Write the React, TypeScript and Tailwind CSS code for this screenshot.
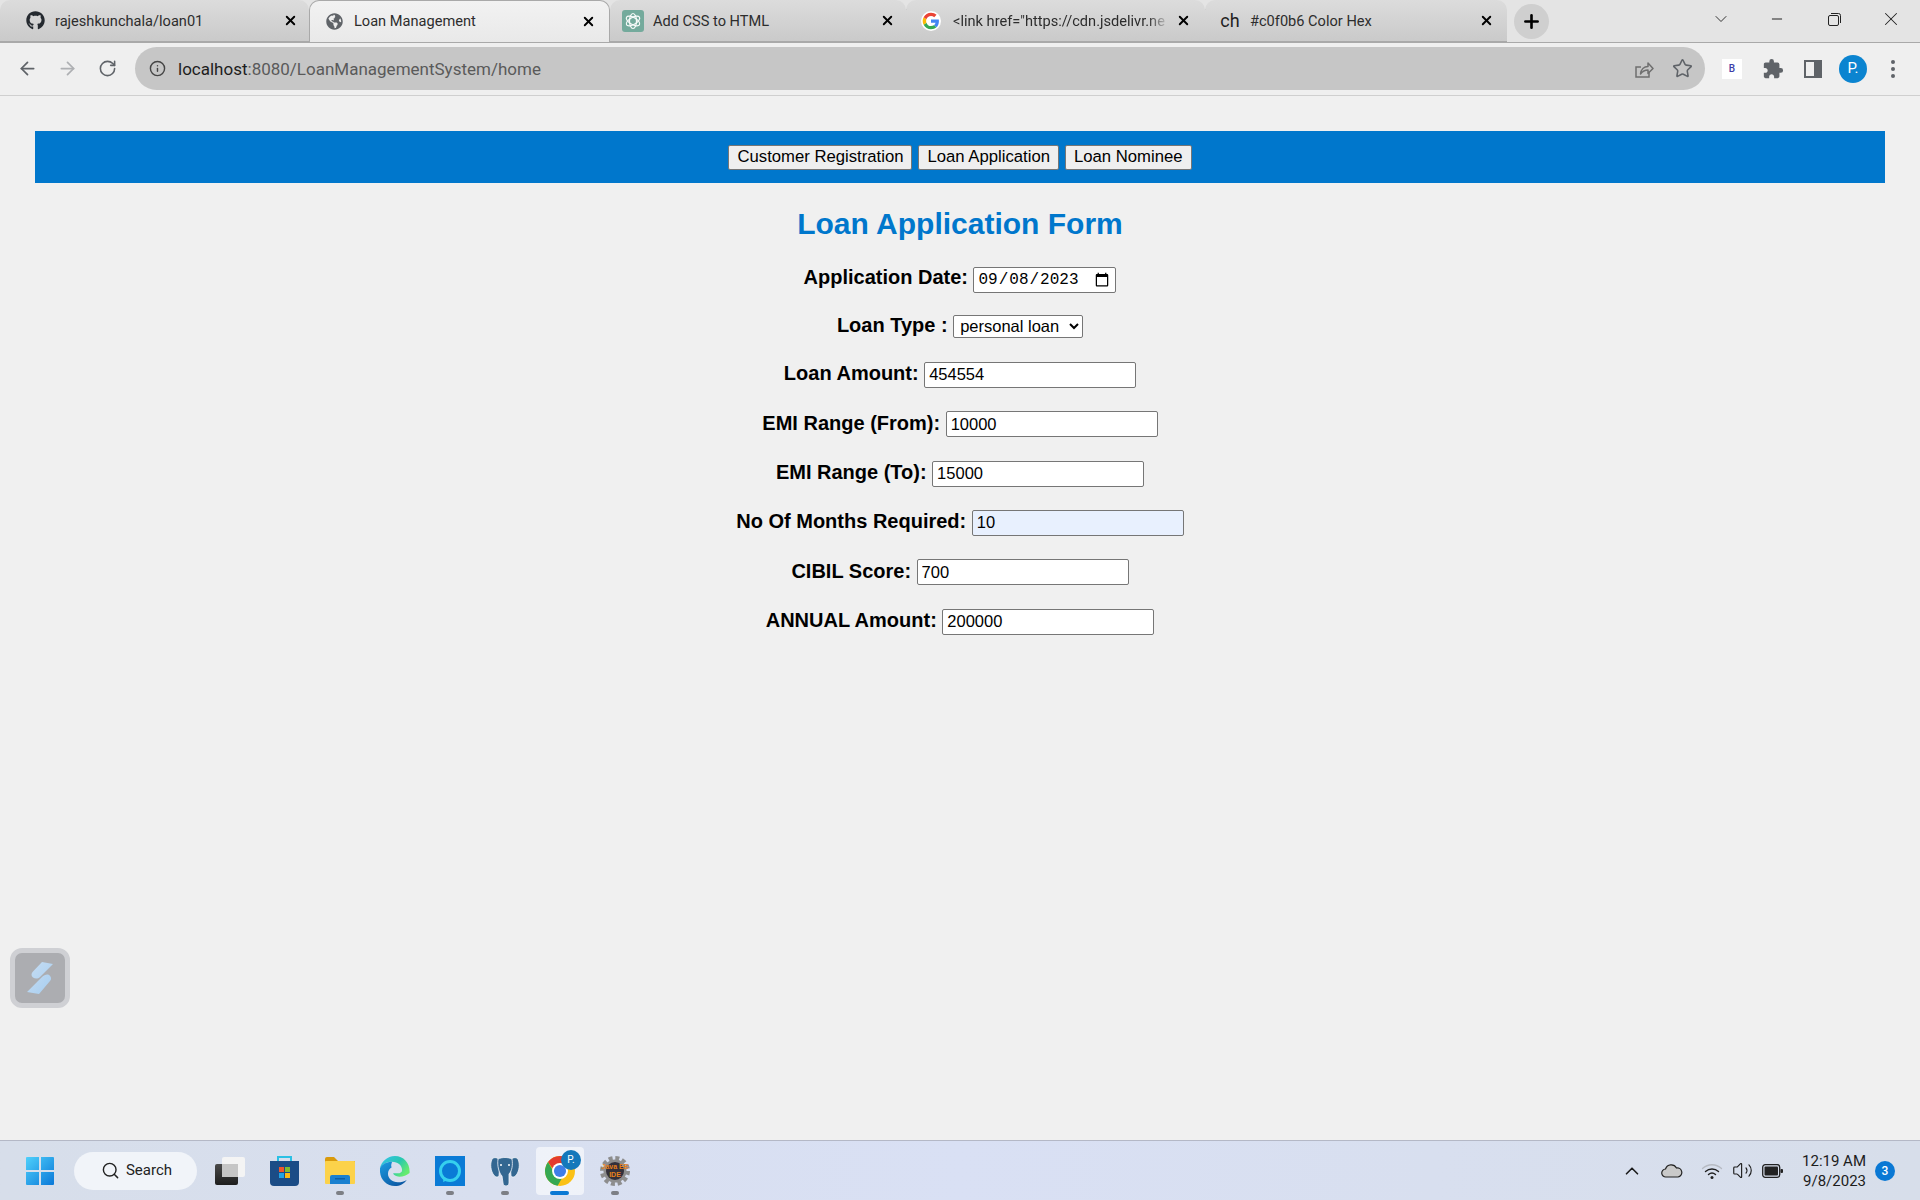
import { ArrowLeft, ArrowRight, RotateCw, Info, Star, Search, ChevronUp, ChevronDown, Minus, X, Plus, Volume2 } from 'lucide-react'
import { FaGithub, FaGlobeAmericas } from 'react-icons/fa'
import { MdExtension } from 'react-icons/md'
import type { ReactNode } from 'react'

const uiFont = "font-['Roboto',sans-serif]"
const pageFont = "font-['Liberation_Sans',Arial,sans-serif]"

function ChatGptIcon() {
  return (
    <svg width="22" height="22" viewBox="0 0 22 22">
      <rect width="22" height="22" rx="3" fill="#74aa9c" />
      <g fill="none" stroke="#fff" strokeWidth="1.2" opacity="0.95">
        <ellipse cx="11" cy="11" rx="3.5" ry="7.5" />
        <ellipse cx="11" cy="11" rx="3.5" ry="7.5" transform="rotate(60 11 11)" />
        <ellipse cx="11" cy="11" rx="3.5" ry="7.5" transform="rotate(120 11 11)" />
      </g>
    </svg>
  )
}

function GoogleIcon() {
  return (
    <svg width="20" height="20" viewBox="0 0 48 48">
      <circle cx="24" cy="24" r="24" fill="#fff" />
      <path fill="#4285F4" d="M43 24.5c0-1.5-.1-2.6-.4-3.9H24v7.3h10.9c-.5 2.6-2 4.8-4.2 6.3l6.4 5c3.8-3.5 5.9-8.700 5.900-14.700z" />
      <path fill="#34A853" d="M24 44c5.400 0 9.900-1.800 13.100-4.800l-6.400-5c-1.700 1.200-4 2-6.700 2-5.200 0-9.600-3.500-11.100-8.200l-6.600 5.100C9.600 39.600 16.300 44 24 44z" />
      <path fill="#FBBC05" d="M12.900 28c-.4-1.200-.6-2.600-.6-4s.2-2.800.6-4l-6.600-5.100C4.800 17.600 4 20.700 4 24s.8 6.400 2.300 9.100z" />
      <path fill="#EA4335" d="M24 11.800c3 0 5.600 1 7.700 3l5.600-5.600C33.900 6 29.400 4 24 4 16.300 4 9.600 8.400 6.300 14.900l6.600 5.100c1.500-4.700 5.900-8.200 11.100-8.200z" />
    </svg>
  )
}

function ShareIcon() {
  return (
    <svg width="20" height="20" viewBox="0 0 20 20" fill="none" stroke="#6f6f6f" strokeWidth="1.5">
      <path d="M15 12.500V18H2V8h5" />
      <path d="M6.500 15c.5-4.500 3.500-7.500 7.500-7.500V4l5 5.500-5 5V11c-3 0-5.500 1.300-7.500 4z" strokeLinejoin="round" />
    </svg>
  )
}

function SidePanelIcon() {
  return (
    <svg width="18" height="18" viewBox="0 0 18 18">
      <path fill="#5f6368" fillRule="evenodd" d="M0 0h18v18H0zM2 2v14h8V2z" />
    </svg>
  )
}

function TaskViewIcon() {
  return (
    <svg width="30" height="28" viewBox="0 0 30 28">
      <defs>
        <linearGradient id="tvDark" x1="0" y1="0" x2="0" y2="1">
          <stop offset="0" stopColor="#4a4a4a" />
          <stop offset="1" stopColor="#1d1d1d" />
        </linearGradient>
      </defs>
      <rect y="7" width="23" height="21" rx="2" fill="url(#tvDark)" />
      <rect x="7" y="0" width="23" height="20" rx="2" fill="#f4f4f4" />
      <rect x="7" y="7" width="16" height="13" fill="#c6c6c6" />
    </svg>
  )
}

function StoreIcon() {
  return (
    <svg width="29" height="30" viewBox="0 0 29 30">
      <path d="M8 6V1h13v5" fill="none" stroke="#2bc0e4" strokeWidth="2" />
      <path d="M0 5h29v21a4 4 0 0 1-4 4H4a4 4 0 0 1-4-4z" fill="#1b4c86" />
      <rect x="9" y="11" width="5" height="5" fill="#f0562a" />
      <rect x="15" y="11" width="5" height="5" fill="#7fbb2f" />
      <rect x="9" y="17" width="5" height="5" fill="#1fa3e5" />
      <rect x="15" y="17" width="5" height="5" fill="#fbb913" />
    </svg>
  )
}

function FilesIcon() {
  return (
    <svg width="30" height="27" viewBox="0 0 30 27">
      <path d="M0 2a2 2 0 0 1 2-2h7l4 4h17v3H0z" fill="#d99a0c" />
      <rect y="4" width="30" height="23" rx="1" fill="#fcd24a" />
      <path d="M5 20a2 2 0 0 1 2-2h16a2 2 0 0 1 2 2v7H5z" fill="#1a80d0" />
      <rect x="10" y="21" width="10" height="1.500" fill="#0d5ea6" />
    </svg>
  )
}

function EdgeIcon() {
  return (
    <svg width="30" height="30" viewBox="0 0 32 32">
      <defs>
        <linearGradient id="edgeA" x1="0" y1="0" x2="1" y2="0.6">
          <stop offset="0" stopColor="#35c1f1" />
          <stop offset="0.6" stopColor="#28c8b0" />
          <stop offset="1" stopColor="#66eb6e" />
        </linearGradient>
        <linearGradient id="edgeB" x1="0" y1="0" x2="0.7" y2="1">
          <stop offset="0" stopColor="#1b9de2" />
          <stop offset="1" stopColor="#0c59a4" />
        </linearGradient>
      </defs>
      <path d="M16 0C7.500 0 1.500 6 0 13c3-5 8-7 12.500-7C20 6 24 11 23.500 15.500c0 2-2 3-4.500 3h-5c.3 2 3 3.500 6.500 3.500 4.500 0 8-1.500 11-4C32.300 8 25.500 0 16 0z" fill="url(#edgeA)" />
      <path d="M0 13C-1 24 6 32 16 32c5 0 10-2.500 12.500-6.500-2.500 1.500-6 2.500-9.500 2.500-6 0-10.500-4-10.500-9 0-3 1.500-5.500 4-7-1.500-2 .5-6 .5-6C7 6 2 8.500 0 13z" fill="url(#edgeB)" />
    </svg>
  )
}

function AlexaIcon() {
  return (
    <svg width="30" height="30" viewBox="0 0 30 30">
      <rect width="30" height="30" fill="#0a7bd6" />
      <circle cx="15" cy="15" r="9.500" fill="none" stroke="#35d0ee" strokeWidth="3" />
      <path d="M9 21l-1 5 6-2.500" fill="#35d0ee" />
    </svg>
  )
}

function PostgresIcon() {
  return (
    <svg width="30" height="30" viewBox="0 0 30 30">
      <g fill="#336791" stroke="#f2f5fa" strokeWidth="0.800" strokeLinejoin="round">
        <path d="M3 2C0 5 0 13 3 18c2 3 4 4 6 2l1-14C9 2 6 1 3 2z" />
        <path d="M27 2c3 3 3 11 0 16-2 3-4 4-6 2l-1-14c1-4 4-5 7-4z" />
        <path d="M8 3c4-2 10-2 14 0 1 6 0 12-3 15v9c0 4-6 4-6 0l-1-7C9 17 7 10 8 3z" />
      </g>
      <circle cx="11" cy="9" r="1" fill="#fff" />
      <circle cx="19" cy="9" r="1" fill="#fff" />
    </svg>
  )
}

function ChromeIcon() {
  return (
    <svg width="30" height="30" viewBox="0 0 32 32">
      <circle cx="16" cy="16" r="16" fill="#fbc116" />
      <path d="M16 0a16 16 0 0 1 13.900 8H16a8 8 0 0 0-7.600 5.500L3.200 6.400A16 16 0 0 1 16 0z" fill="#e33b2e" />
      <path d="M3.200 6.400l6.900 12A8 8 0 0 0 18 23.800L13.500 31.800A16 16 0 0 1 3.200 6.400z" fill="#35a853" />
      <circle cx="16" cy="16" r="8.500" fill="#fff" />
      <circle cx="16" cy="16" r="6.500" fill="#3f7ee8" />
    </svg>
  )
}

function GearIcon() {
  return (
    <svg width="30" height="30" viewBox="0 0 30 30">
      <circle cx="15" cy="15" r="13" fill="none" stroke="#8d8d8d" strokeWidth="4" strokeDasharray="4 2.800" />
      <circle cx="15" cy="15" r="11.500" fill="#8d8d8d" />
      <circle cx="15" cy="15" r="9" fill="#33303a" />
      <text x="15" y="13" textAnchor="middle" fontSize="7" fontWeight="700" fill="#e8801a" fontFamily="Liberation Sans, sans-serif">Java EE</text>
      <text x="15" y="21" textAnchor="middle" fontSize="7" fontWeight="700" fill="#e8801a" fontFamily="Liberation Sans, sans-serif">IDE</text>
    </svg>
  )
}

function WifiIcon() {
  return (
    <svg width="22" height="18" viewBox="0 0 22 18" fill="none" strokeLinecap="round">
      <path d="M1.500 6.500c5.500-5 13.500-5 19 0" stroke="#b6bac2" strokeWidth="1.300" />
      <path d="M4.500 9.500c3.700-3.300 9.300-3.300 13 0M7.500 12.500c2-1.700 5-1.700 7 0" stroke="#202020" strokeWidth="1.400" />
      <circle cx="11" cy="15.500" r="1.500" fill="#202020" />
    </svg>
  )
}

function CloudIcon() {
  return (
    <svg width="22" height="14" viewBox="0 0 22 14">
      <path d="M5 13a4 4 0 0 1-.5-8A6 6 0 0 1 15.500 4 4.500 4.500 0 0 1 17 13z" fill="#c9c9c9" stroke="#222" strokeWidth="1.200" />
    </svg>
  )
}

function BatteryIcon() {
  return (
    <svg width="21" height="14" viewBox="0 0 21 14">
      <rect x="0.700" y="0.700" width="17" height="12.600" rx="2.500" fill="none" stroke="#222" strokeWidth="1.300" />
      <rect x="2.500" y="2.500" width="13.500" height="9" rx="1" fill="#222" />
      <rect x="18.500" y="5" width="2.500" height="4" rx="1" fill="#222" />
    </svg>
  )
}

function TabClose() {
  return <X size={15} strokeWidth={3} className="text-black" />
}

interface Tab {
  title: string
  icon: ReactNode
  active?: boolean
  width: string
  titleGap: string
  sep?: boolean
  fade?: boolean
}

const tabs: Tab[] = [
  { title: 'rajeshkunchala/loan01', icon: <FaGithub size={19} className="text-[#24292f]" />, width: 'w-[309px] pl-[24px] pr-[11px]', titleGap: 'ml-[9px] mt-[2px]' },
  { title: 'Loan Management', icon: <FaGlobeAmericas size={17} className="text-[#5f6368]" />, active: true, width: 'w-[301px] pl-[13px] pr-[13px]', titleGap: 'ml-[9px] mt-[1px]' },
  { title: 'Add CSS to HTML', icon: <ChatGptIcon />, width: 'w-[296px] pl-[12px] pr-[11px]', titleGap: 'ml-[9px] mt-[2px]', sep: true },
  { title: '<link href="https://cdn.jsdelivr.ne', icon: <GoogleIcon />, width: 'w-[299px] pl-[14px] pr-[14px]', titleGap: 'ml-[11px] mt-[2px]', sep: true, fade: true },
  { title: '#c0f0b6 Color Hex', icon: <span className={`${uiFont} text-[18px] leading-none text-[#222]`}>ch</span>, width: 'w-[302px] pl-[14px] pr-[13px]', titleGap: 'ml-[9px] mt-[2px]' },
]

function TabItem({ tab }: { tab: Tab }) {
  return (
    <div
      className={`relative flex h-[42px] shrink-0 items-center rounded-t-[10px] ${tab.width} ${
        tab.active
          ? 'border border-b-0 border-[#a9a9a9] bg-gradient-to-b from-[#f2f2f2] to-[#e9e9e9]'
          : 'border-b border-[#a9a9a9] bg-gradient-to-b from-[#dcdcdc] to-[#cacaca]'
      }`}
    >
      <span className="flex w-[22px] shrink-0 items-center justify-center">{tab.icon}</span>
      <span
        className={`${uiFont} ${tab.titleGap} min-w-0 flex-1 overflow-hidden text-[14.600px] whitespace-nowrap text-[#2d2d2d] ${
          tab.fade ? '[mask-image:linear-gradient(to_right,black_90%,transparent)]' : ''
        }`}
      >
        {tab.title}
      </span>
      <span className="ml-[6px] flex w-[16px] shrink-0 justify-center">
        <TabClose />
      </span>
      {tab.sep && <span className="absolute top-[9px] right-[-1px] h-[26px] w-px bg-[#8f8f8f]" />}
    </div>
  )
}

function BrowserChrome() {
  return (
    <header className="shrink-0">
      <div className="flex h-[43px] items-start border-b border-[#a9a9a9] bg-[#e4e4e4]">
        {tabs.map((tab) => (
          <TabItem key={tab.title} tab={tab} />
        ))}
        <span className="mt-[4px] ml-[7px] flex h-[35px] w-[35px] items-center justify-center rounded-full bg-[#cfcfcf]">
          <Plus size={21} strokeWidth={3} className="text-black" />
        </span>
        <span className="ml-auto flex items-start text-[#222]">
          <span className="flex h-[38px] w-[57px] items-center justify-center">
            <ChevronDown size={20} strokeWidth={1.100} />
          </span>
          <span className="flex h-[38px] w-[57px] items-center justify-center pr-[2px]">
            <Minus size={16} strokeWidth={1.500} />
          </span>
          <span className="flex h-[38px] w-[57px] items-center justify-center">
            <svg width="13" height="13" viewBox="0 0 13 13" fill="none" stroke="#222" strokeWidth="1">
              <rect x="0.500" y="2.500" width="10" height="10" rx="1.500" />
              <path d="M3 0.500h7.500a2 2 0 0 1 2 2V10" />
            </svg>
          </span>
          <span className="flex h-[38px] w-[57px] items-center justify-center pr-[1px]">
            <X size={22} strokeWidth={1.100} />
          </span>
        </span>
      </div>
      <div className="flex h-[53px] items-center border-b border-[#cfcfcf] bg-[#efefef] pb-[1px]">
        <div className="flex w-[135px] shrink-0 items-center pl-[17px] text-[#5f6368]">
          <ArrowLeft size={21} strokeWidth={2} className="mr-[19px]" />
          <ArrowRight size={21} strokeWidth={2} className="mr-[20px] text-[#aeb0b3]" />
          <RotateCw size={19} strokeWidth={2} />
        </div>
        <div className="flex h-[43px] w-[1570px] items-center rounded-full bg-[#c6c6c6] pr-[12px] pl-[14px]">
          <Info size={17} strokeWidth={2} className="text-[#444]" />
          <span className={`${uiFont} mt-[2px] ml-[12px] text-[17px] text-[#5a5a5a]`}>
            <span className="text-[#1d1d1d]">localhost</span>:8080/LoanManagementSystem/home
          </span>
          <span className="ml-auto flex items-center gap-[18px]">
            <ShareIcon />
            <Star size={21} strokeWidth={1.800} className="text-[#5f6368]" />
          </span>
        </div>
        <div className="flex flex-1 items-center pl-[17px]">
          <span className={`${uiFont} flex h-[20px] w-[20px] items-center justify-center bg-white text-[10px] font-medium text-[#3c3ca8]`}>B</span>
          <MdExtension size={22} className="ml-[20px] text-[#5f6368]" />
          <span className="ml-[20px] flex">
            <SidePanelIcon />
          </span>
          <span className={`${uiFont} ml-[17px] flex h-[28px] w-[28px] items-center justify-center rounded-full bg-[#0b84d0] text-[15px] text-white`}>P.</span>
          <span className="ml-[24px] flex flex-col gap-[3px]">
            <i className="h-[4px] w-[4px] rounded-full bg-[#5f6368]" />
            <i className="h-[4px] w-[4px] rounded-full bg-[#5f6368]" />
            <i className="h-[4px] w-[4px] rounded-full bg-[#5f6368]" />
          </span>
        </div>
      </div>
    </header>
  )
}

const fields = [
  { label: 'Loan Amount:', value: '454554', fill: 'bg-white' },
  { label: 'EMI Range (From):', value: '10000', fill: 'bg-white' },
  { label: 'EMI Range (To):', value: '15000', fill: 'bg-white' },
  { label: 'No Of Months Required:', value: '10', fill: 'bg-[#e8f0fe]' },
  { label: 'CIBIL Score:', value: '700', fill: 'bg-white' },
  { label: 'ANNUAL Amount:', value: '200000', fill: 'bg-white' },
]

function FormRow({ label, height, children }: { label: string; height: string; children: ReactNode }) {
  return (
    <div className={`flex items-center justify-center ${height}`}>
      <div className="flex items-baseline gap-[5.500px]">
        <label className="text-[20px] font-bold text-black">{label}</label>
        {children}
      </div>
    </div>
  )
}

function LoanForm() {
  return (
    <main className={`flex-1 px-[35px] pt-[35px] ${pageFont}`}>
      <nav className="flex h-[52px] items-center justify-center gap-[6px] bg-[#0077cc]">
        {['Customer Registration', 'Loan Application', 'Loan Nominee'].map((item) => (
          <button key={item} className="h-[25px] rounded-[2px] border border-[#767676] bg-[#efefef] px-[8px] text-[16.700px] leading-none text-black">
            {item}
          </button>
        ))}
      </nav>
      <h1 className="mt-[21px] mb-[8.500px] text-center text-[30px] leading-[40px] font-bold text-[#0077cc]">Loan Application Form</h1>
      <FormRow label="Application Date:" height="h-[49px]">
        <input
          type="date"
          defaultValue="2023-09-08"
          className="h-[26px] w-[143px] rounded-[2px] border border-[#767676] bg-white px-[3px] font-['Liberation_Mono',monospace] text-[16px] text-black"
        />
      </FormRow>
      <FormRow label="Loan Type :" height="h-[47.100px]">
        <select defaultValue="personal" className="h-[23px] w-[130px] rounded-[2px] border border-[#767676] bg-white pl-[2px] text-[16.500px] text-black">
          <option value="personal">personal loan</option>
        </select>
      </FormRow>
      {fields.map((field) => (
        <FormRow key={field.label} label={field.label} height="h-[49.400px]">
          <input
            type="text"
            defaultValue={field.value}
            className={`h-[26px] w-[212px] rounded-[2px] border border-[#767676] pl-[4px] text-[16.500px] text-black ${field.fill}`}
          />
        </FormRow>
      ))}
    </main>
  )
}

const pinned: { key: string; icon: ReactNode; open?: boolean; focused?: boolean }[] = [
  { key: 'taskview', icon: <TaskViewIcon /> },
  { key: 'store', icon: <StoreIcon /> },
  { key: 'files', icon: <FilesIcon />, open: true },
  { key: 'edge', icon: <EdgeIcon /> },
  { key: 'alexa', icon: <AlexaIcon />, open: true },
  { key: 'postgres', icon: <PostgresIcon />, open: true },
  { key: 'chrome', icon: <ChromeIcon />, focused: true },
  { key: 'eclipse', icon: <GearIcon />, open: true },
]

function Taskbar() {
  return (
    <footer className={`${uiFont} flex h-[60px] shrink-0 items-center border-t border-[#b4b8c6] bg-gradient-to-r from-[#d7deea] via-[#d9e0f4] to-[#d7deea] pl-[12px]`}>
      <span className="flex w-[55px] justify-center">
        <svg width="30" height="30" viewBox="0 0 30 30">
          <defs>
            <linearGradient id="win" x1="0" y1="0" x2="1" y2="1">
              <stop offset="0" stopColor="#4fd0fb" />
              <stop offset="1" stopColor="#0a78d8" />
            </linearGradient>
          </defs>
          <path fill="url(#win)" d="M1 2a1 1 0 0 1 1-1h12v13H1zM16 1h12a1 1 0 0 1 1 1v12H16zM1 16h13v13H2a1 1 0 0 1-1-1zM16 16h13v12a1 1 0 0 1-1 1H16z" />
        </svg>
      </span>
      <span className="ml-[7px] flex h-[38px] w-[123px] items-center justify-center gap-[6px] rounded-full bg-[#f1f4f9] pl-[2px] text-[15px] text-[#222]">
        <Search size={19} strokeWidth={1.800} />
        Search
      </span>
      <div className="ml-[5px] flex">
        {pinned.map((item) => (
          <span key={item.key} className="relative flex h-[48px] w-[55px] items-center justify-center">
            {item.focused && <span className="absolute inset-y-0 left-[4px] w-[48px] rounded-[4px] bg-white/60" />}
            <span className="relative flex">{item.icon}</span>
            {item.focused && (
              <span className="absolute top-[3px] left-[29px] flex h-[20px] w-[20px] items-center justify-center rounded-full bg-[#1478bb] text-[10px] text-white">P.</span>
            )}
            {item.open && <span className="absolute bottom-0 left-[24px] h-[4px] w-[8px] rounded-full bg-[#7d7f85]" />}
            {item.focused && <span className="absolute bottom-0 left-[18px] h-[4px] w-[19px] rounded-full bg-[#0a78d4]" />}
          </span>
        ))}
      </div>
      <div className="ml-auto flex items-center text-[#1c1c1c]">
        <ChevronUp size={22} strokeWidth={1.800} />
        <span className="ml-[18px] flex">
          <CloudIcon />
        </span>
        <span className="ml-[18px] flex">
          <WifiIcon />
        </span>
        <Volume2 size={21} strokeWidth={1.300} className="ml-[9px]" />
        <span className="ml-[9px] flex">
          <BatteryIcon />
        </span>
        <span className="ml-[19px] flex flex-col items-end text-[15px] leading-[20px]">
          <span>12:19 AM</span>
          <span>9/8/2023</span>
        </span>
        <span className="mr-[25px] ml-[9px] flex h-[20px] w-[20px] items-center justify-center rounded-full bg-[#0a78d4] text-[12px] font-medium text-white">3</span>
      </div>
    </footer>
  )
}

export default function App() {
  return (
    <div className="relative flex h-[1200px] w-[1920px] flex-col overflow-hidden bg-[#f0f0f0]">
      <BrowserChrome />
      <LoanForm />
      <Taskbar />
      {/* Floating launcher from a browser extension */}
      <div className="absolute top-[948px] left-[10px] flex h-[60px] w-[60px] items-center justify-center rounded-[12px] border-[5px] border-[#cfd0d4] bg-[#acadb1]">
        <svg width="28" height="34" viewBox="0 0 28 34">
          <defs>
            <linearGradient id="bolt" x1="0" y1="0" x2="1" y2="1">
              <stop offset="0" stopColor="#c8def3" />
              <stop offset="1" stopColor="#a6cdf0" />
            </linearGradient>
          </defs>
          <path fill="url(#bolt)" d="M16 1l11 2-13 13c-2 2-5 2-7 .500s-2-4 0-6zM23 14c2 1.500 3 4 1 6L13 33 1 31l15-15c2-2 5-3 7-2z" />
        </svg>
      </div>
    </div>
  )
}
